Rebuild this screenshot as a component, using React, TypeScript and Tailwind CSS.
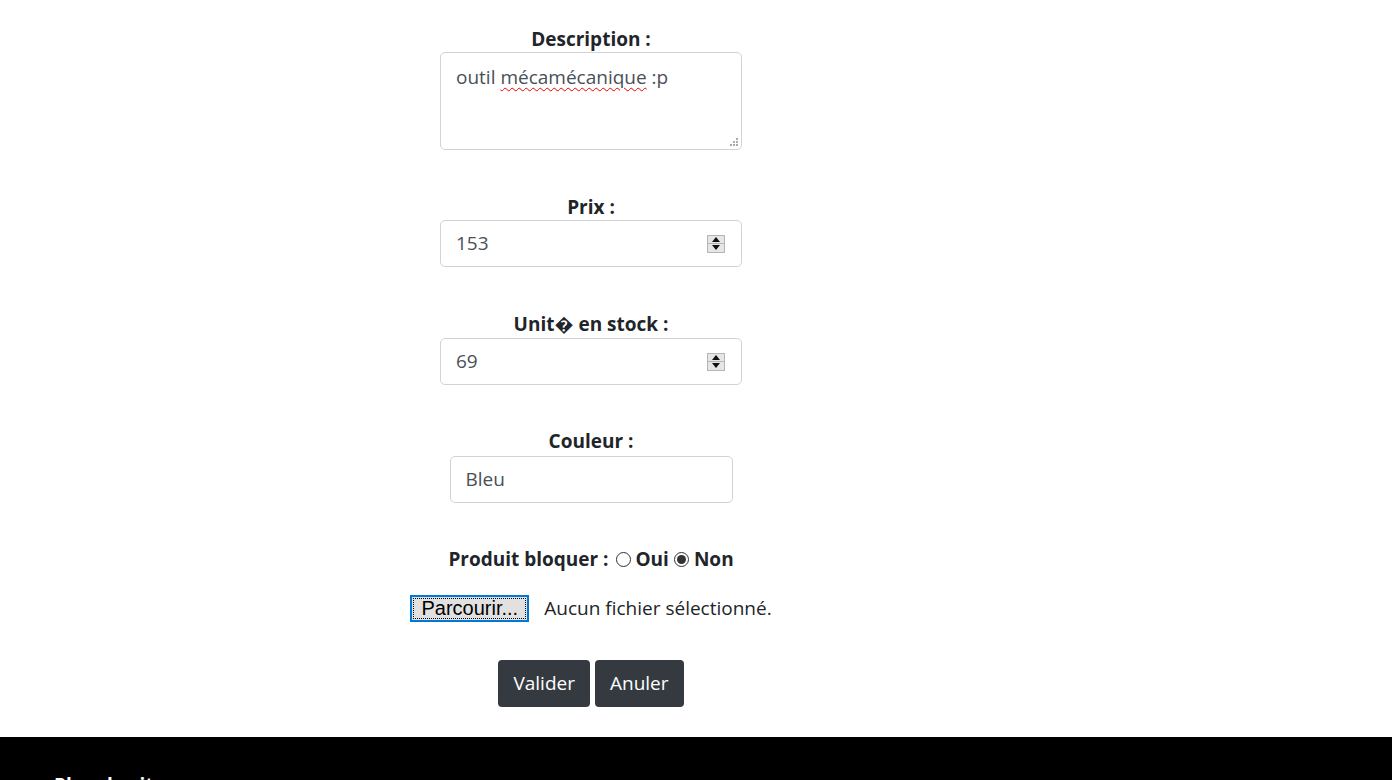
const FONT = { fontFamily: '"Open Sans", "Noto Sans", sans-serif' };

function Label({ children }: { children: React.ReactNode }) {
  return <p className="text-[19px] font-bold leading-[26px] text-[#212529]">{children}</p>;
}

function Spinner() {
  return (
    <div className="flex h-[18px] w-[18px] flex-col border border-[#b5b5b5] bg-[#e6e6e6]">
      <div className="flex flex-1 items-center justify-center border-b border-[#b5b5b5]">
        <svg width="8" height="5" viewBox="0 0 8 5"><path d="M0 5L4 0L8 5Z" fill="#111" /></svg>
      </div>
      <div className="flex flex-1 items-center justify-center">
        <svg width="8" height="5" viewBox="0 0 8 5"><path d="M0 0L4 5L8 0Z" fill="#111" /></svg>
      </div>
    </div>
  );
}

function NumberField({ value, className }: { value: string; className: string }) {
  return (
    <div
      className={`${className} flex h-[47px] w-[302px] items-center justify-between rounded-[5px] border border-[#ced4da] bg-white pl-[15px] pr-[16px] text-[19px] text-[#495057]`}
    >
      <span>{value}</span>
      <Spinner />
    </div>
  );
}

function Radio({ checked }: { checked?: boolean }) {
  return (
    <span className="mx-[5px] inline-flex h-[15px] w-[15px] items-center justify-center rounded-full border border-[#333] bg-white">
      {checked && <span className="h-[9px] w-[9px] rounded-full bg-[#333]" />}
    </span>
  );
}

export default function App() {
  return (
    <div className="min-h-screen bg-white" style={FONT}>
      <div className="flex flex-col items-center pr-[210px] pt-[26px]">
        <Label>Description :</Label>
        <div className="relative h-[98px] w-[302px] rounded-[5px] border border-[#ced4da] bg-white px-[15px] pt-[10px] text-[19px] text-[#495057]">
          outil{" "}
          <span className="underline decoration-[#e00] decoration-wavy decoration-1 underline-offset-[3px]">
            mécamécanique
          </span>{" "}
          :p
          <svg className="absolute bottom-[2px] right-[2px]" width="10" height="10" viewBox="0 0 10 10">
            <rect x="7" y="1" width="2" height="2" fill="#aaa" />
            <rect x="4" y="4" width="2" height="2" fill="#aaa" />
            <rect x="7" y="4" width="2" height="2" fill="#aaa" />
            <rect x="1" y="7" width="2" height="2" fill="#aaa" />
            <rect x="4" y="7" width="2" height="2" fill="#aaa" />
            <rect x="7" y="7" width="2" height="2" fill="#aaa" />
          </svg>
        </div>

        <div className="mt-[44px]">
          <Label>Prix :</Label>
        </div>
        <NumberField value="153" className="mt-0" />

        <div className="mt-[44px]">
          <Label>Unit� en stock :</Label>
        </div>
        <NumberField value="69" className="mt-[1px]" />

        <div className="mt-[43px]">
          <Label>Couleur :</Label>
        </div>
        <div className="mt-[2px] flex h-[47px] w-[283px] items-center rounded-[5px] border border-[#ced4da] bg-white pl-[15px] text-[19px] text-[#495057]">
          Bleu
        </div>

        <div className="mt-[43px] flex items-center text-[19px] font-bold leading-[26px] text-[#212529]">
          Produit bloquer :<span className="w-[2px]" />
          <Radio />
          Oui
          <Radio checked />
          Non
        </div>

        <div className="mt-[22px] flex items-center">
          <div className="flex h-[27px] w-[119px] items-center justify-center border-2 border-[#0078d7] bg-[#e1e1e1] p-[1px]">
            <span
              className="flex h-full w-full items-center justify-center border border-dotted border-black text-[20px] leading-none text-black"
              style={{ fontFamily: '"Liberation Sans", sans-serif' }}
            >
              Parcourir...
            </span>
          </div>
          <span className="ml-[15px] text-[19px] text-[#212529]">Aucun fichier sélectionné.</span>
        </div>

        <div className="mt-[37px] flex gap-[5px]">
          <button className="h-[47px] rounded-[4px] bg-[#343a40] px-[15px] text-[19px] text-white">Valider</button>
          <button className="h-[47px] rounded-[4px] bg-[#343a40] px-[15px] text-[19px] text-white">Anuler</button>
        </div>
      </div>

      <footer className="mt-[30px] h-[200px] bg-black px-[54px] pt-[34px]">
        <p className="text-[19px] font-bold text-white">Plan du site</p>
      </footer>
    </div>
  );
}
